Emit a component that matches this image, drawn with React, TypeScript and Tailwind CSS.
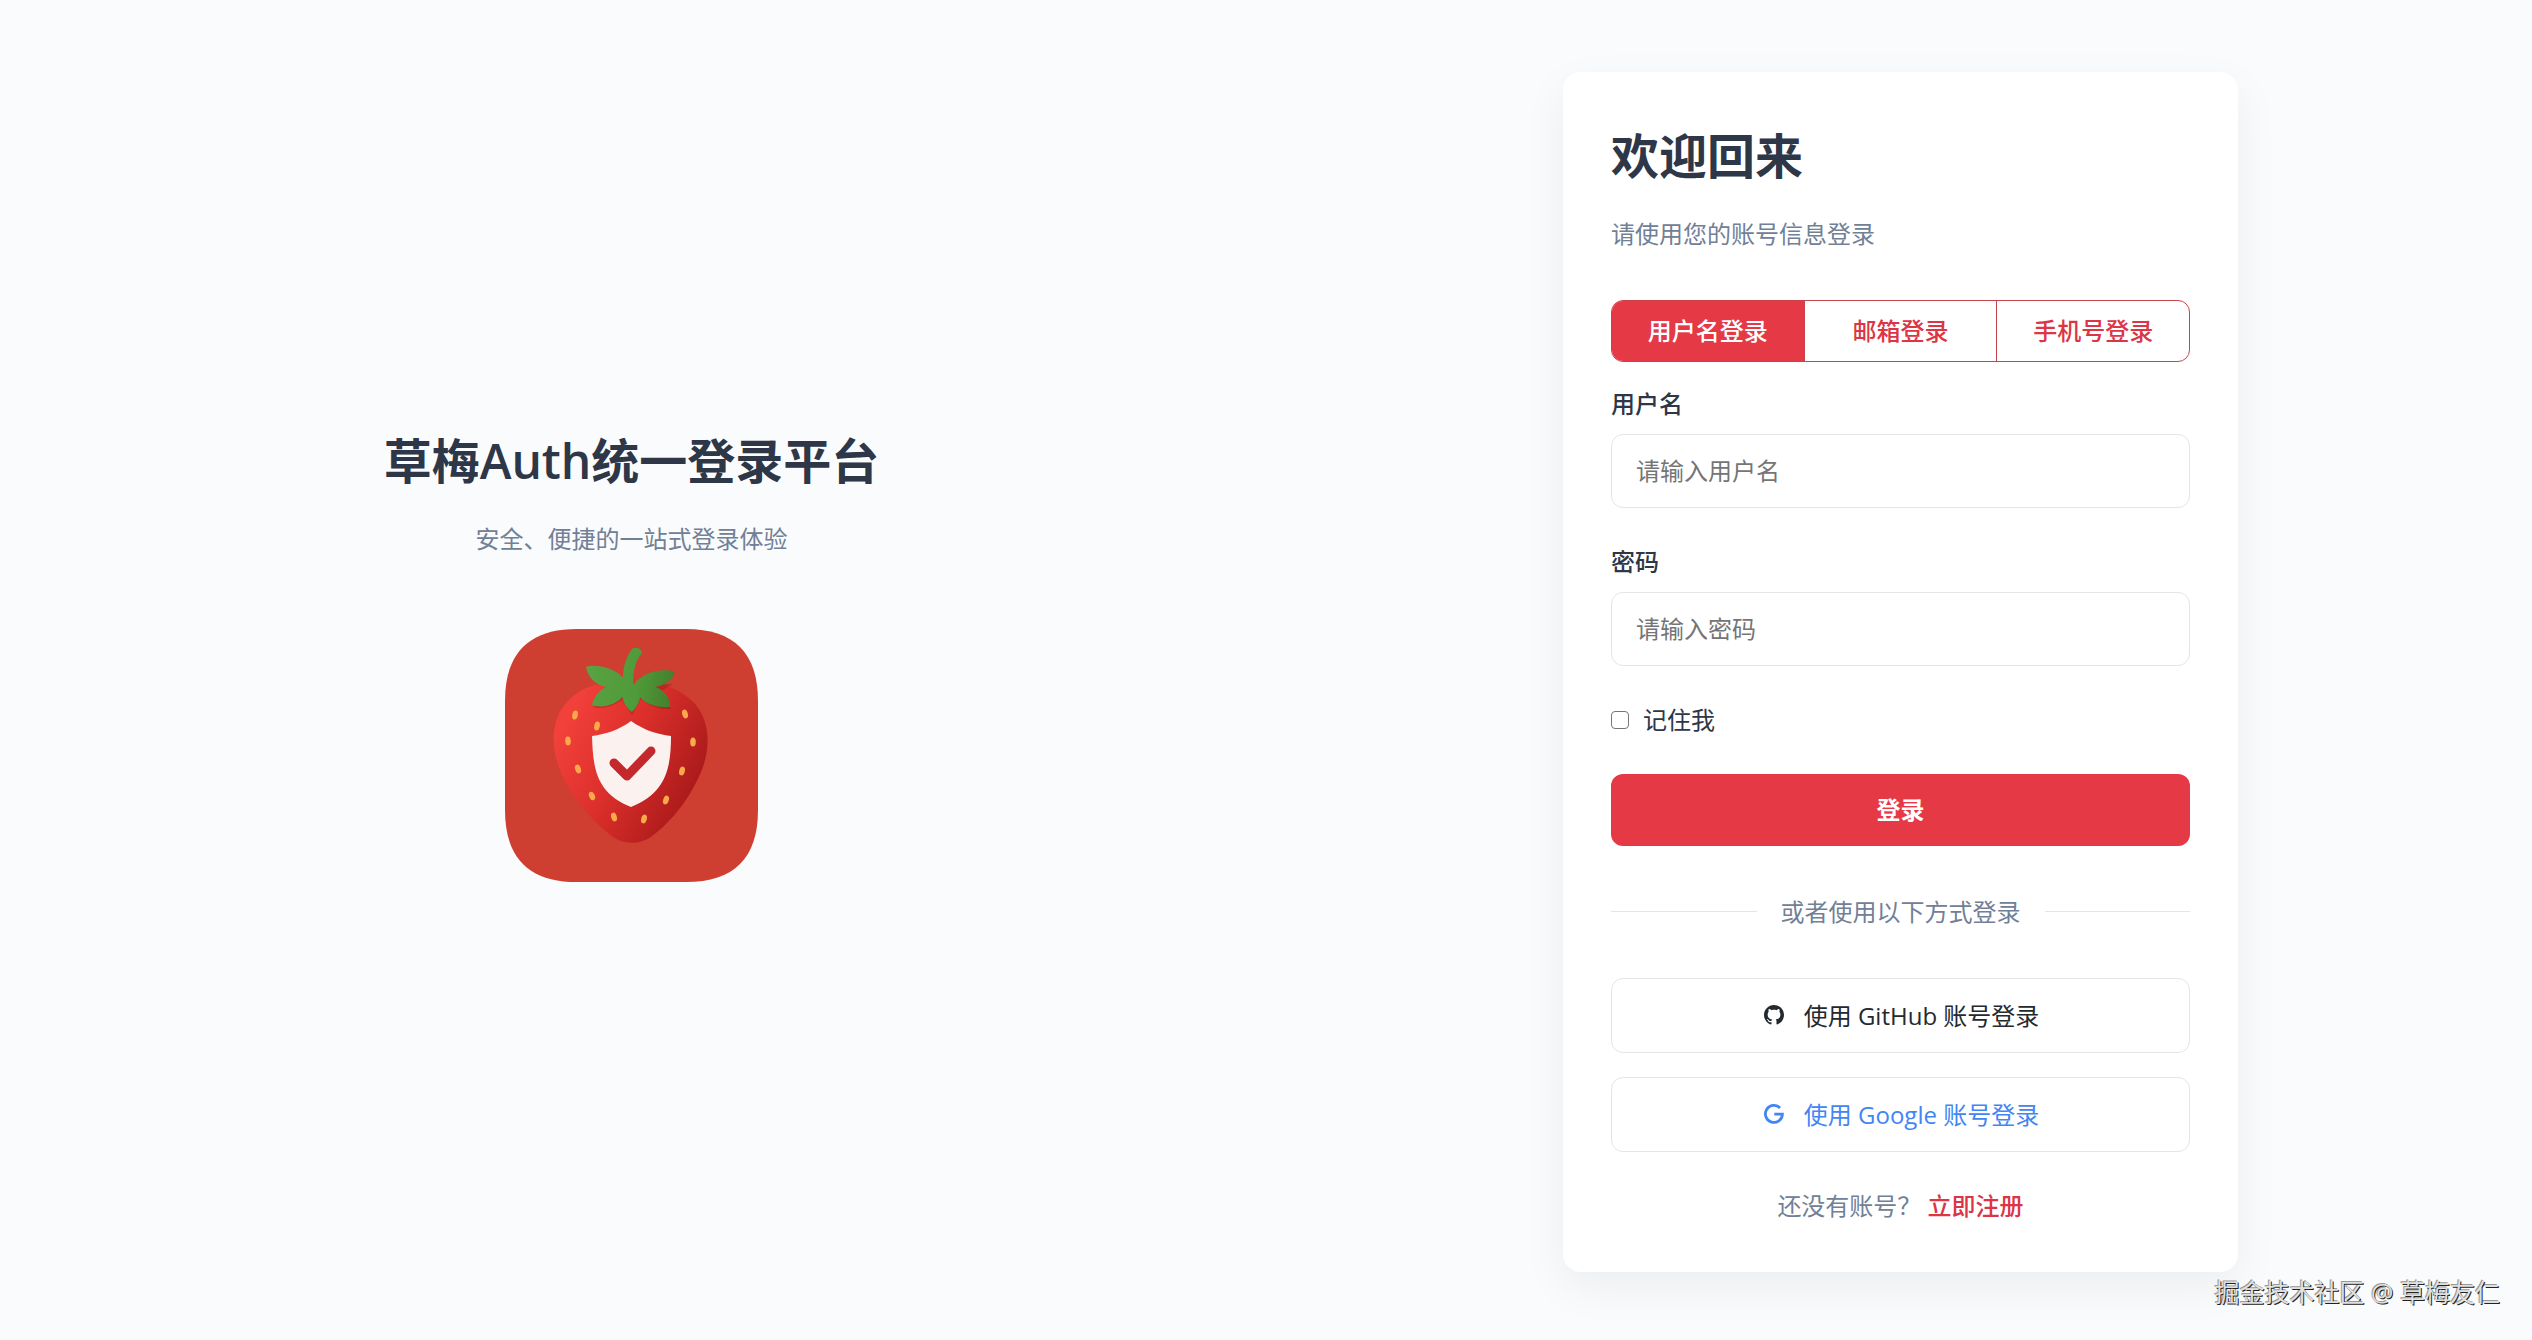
import { RiGithubFill } from 'react-icons/ri'

const tabs = ['用户名登录', '邮箱登录', '手机号登录']

const fields = [
  { id: 'username', label: '用户名', type: 'text', placeholder: '请输入用户名' },
  { id: 'password', label: '密码', type: 'password', placeholder: '请输入密码' },
]

const seeds = [
  { x: 70, y: 86, r: 12 },
  { x: 92, y: 97, r: 12 },
  { x: 63, y: 112, r: -4 },
  { x: 73, y: 140, r: -20 },
  { x: 87, y: 167, r: -24 },
  { x: 109, y: 188, r: -16 },
  { x: 139, y: 190, r: 16 },
  { x: 161, y: 171, r: 18 },
  { x: 177, y: 142, r: 14 },
  { x: 188, y: 113, r: 0 },
  { x: 180, y: 85, r: -16 },
]

function Logo() {
  return (
    <svg viewBox="0 0 253 253" className="size-[253px]" role="img" aria-label="草梅Auth">
      <defs>
        <linearGradient id="berry" x1="0.1" y1="0.2" x2="0.95" y2="0.65">
          <stop offset="0" stopColor="#f2403a" />
          <stop offset="0.45" stopColor="#dc2f2b" />
          <stop offset="1" stopColor="#a81a1a" />
        </linearGradient>
        <linearGradient id="leaf" x1="81" y1="40" x2="169" y2="55" gradientUnits="userSpaceOnUse">
          <stop offset="0" stopColor="#5aa243" />
          <stop offset="0.6" stopColor="#4f9a3a" />
          <stop offset="1" stopColor="#447f2c" />
        </linearGradient>
      </defs>
      <path
        fill="#ce3e31"
        d="M72 0H181C229 0 253 24 253 72V181C253 229 229 253 181 253H72C24 253 0 229 0 181V72C0 24 24 0 72 0Z"
      />
      <path
        fill="url(#berry)"
        d="M126 54C98 50 70 58 56 81C45 100 47 124 57 146C69 171 87 191 104 205C115 215 133 217 146 208C168 192 188 165 198 138C205 117 205 94 191 76C177 59 152 51 126 54Z"
      />
      {seeds.map((s) => (
        <ellipse
          key={`${s.x}-${s.y}`}
          cx={s.x}
          cy={s.y}
          rx="2.8"
          ry="4.5"
          fill="#f9a84a"
          transform={`rotate(${s.r} ${s.x} ${s.y})`}
        />
      ))}
      <path
        fill="#7c1512"
        opacity="0.3"
        d="M88 78C99 81 110 76 117 71L127 86L136 70C145 77 155 81 166 80L156 62L168 55L120 56Z"
      />
      <g fill="url(#leaf)">
        <path d="M81 38C92 34 112 40 119 50L122 62C112 58 108 57 101 58C90 55 83 49 81 38Z" />
        <path d="M130 54C137 46 150 39 169 42C171 44 166 53 157 56C148 60 138 58 130 63Z" />
        <path d="M124 55C108 54 92 57 87 76C98 80 112 75 117 68L124 64Z" />
        <path d="M130 56C140 56 150 57 155 60C161 64 166 71 165 78C152 79 140 75 134 67L128 62Z" />
        <path d="M116 60L118 54C117 40 121 27 128 19C132 18 137 20 137 24C130 32 128 43 128 54L136 62C136 70 133 77 127 83C120 78 117 71 116 60Z" />
      </g>
      <path
        fill="#fbf2ef"
        d="M126 92C139 101 151 105 166 107C166 137 162 164 126 178C90 164 88 137 87 107C101 105 114 101 126 92Z"
      />
      <path
        fill="none"
        stroke="#c3282d"
        strokeWidth="9"
        strokeLinecap="round"
        strokeLinejoin="round"
        d="M109 134L122 147L146 122"
      />
    </svg>
  )
}

function GoogleIcon() {
  return (
    <svg viewBox="0 0 24 24" className="size-6" fill="none" stroke="currentColor" strokeWidth="2.8" aria-hidden="true">
      <path d="M18 6A8.5 8.5 0 1 0 20.4 12.2H12.3" />
    </svg>
  )
}

export default function App() {
  return (
    <div className="relative grid min-h-screen grid-cols-1 items-center gap-1.5 bg-[#fafbfd] pt-[3px] font-['Open_Sans','Noto_Sans_CJK_SC',sans-serif] text-2xl leading-9 text-[#2d3748] lg:grid-cols-2">
      <section className="flex flex-col items-center pt-6 pb-15">
        <h1 className="mb-6 text-5xl leading-[72px] font-semibold">草梅Auth统一登录平台</h1>
        <p className="mb-18 text-[#718096]">安全、便捷的一站式登录体验</p>
        <Logo />
      </section>

      <main className="mx-auto w-full max-w-[675px] rounded-[18px] bg-white p-12 shadow-[0_15px_45px_rgba(0,0,0,0.06)]">
        <h2 className="mb-6 text-5xl leading-[72px] font-bold">欢迎回来</h2>
        <p className="mb-12 text-[#718096]">请使用您的账号信息登录</p>

        <form>
          <div className="mb-6 flex overflow-hidden rounded-xl border border-[#c9434d]">
            {tabs.map((tab, i) => (
              <button
                key={tab}
                type="button"
                className={
                  i === 0
                    ? 'flex-1 bg-[#e63946] py-3 font-medium text-white'
                    : 'flex-1 border-l border-[#c9434d] py-3 font-medium text-[#dc3545]'
                }
              >
                {tab}
              </button>
            ))}
          </div>

          {fields.map((field) => (
            <div key={field.id} className="mb-9">
              <label htmlFor={field.id} className="mb-3 block font-medium">
                {field.label}
              </label>
              <input
                id={field.id}
                type={field.type}
                placeholder={field.placeholder}
                className="block w-full rounded-xl border border-[#e2e6e9] px-6 py-[18px] placeholder:text-[#757575]"
              />
            </div>
          ))}

          <div className="mb-9 flex items-center gap-3.5">
            <input
              id="remember"
              type="checkbox"
              className="size-[18px] appearance-none rounded border border-[#767676] bg-white checked:bg-[#e63946]"
            />
            <label htmlFor="remember">记住我</label>
          </div>

          <button type="submit" className="w-full rounded-xl bg-[#e63946] py-[18px] font-semibold text-white">
            登录
          </button>
        </form>

        <div className="my-12 flex items-center gap-6 text-[#718096]">
          <span className="h-px flex-1 bg-[#e2e6e9]" />
          <span>或者使用以下方式登录</span>
          <span className="h-px flex-1 bg-[#e2e6e9]" />
        </div>

        <div className="flex flex-col gap-6">
          <button
            type="button"
            className="flex items-center justify-center gap-[18px] rounded-xl border border-[#e2e6e9] py-[18px] leading-[37px] text-[#24292e]"
          >
            <RiGithubFill className="size-6" />
            使用 GitHub 账号登录
          </button>
          <button
            type="button"
            className="flex items-center justify-center gap-[18px] rounded-xl border border-[#e2e6e9] py-[18px] leading-[37px] text-[#4285f4]"
          >
            <GoogleIcon />
            使用 Google 账号登录
          </button>
        </div>

        <p className="mt-9 text-center text-[#718096]">
          还没有账号？{' '}
          <a href="#" className="font-medium text-[#dc3545]">
            立即注册
          </a>
        </p>
      </main>

      <div className="absolute right-8 bottom-[30px] text-[25px] text-[#e0e0e0] [text-shadow:1px_1px_0_#222,-1px_-1px_0_#999]">
        掘金技术社区 @ 草梅友仁
      </div>
    </div>
  )
}
